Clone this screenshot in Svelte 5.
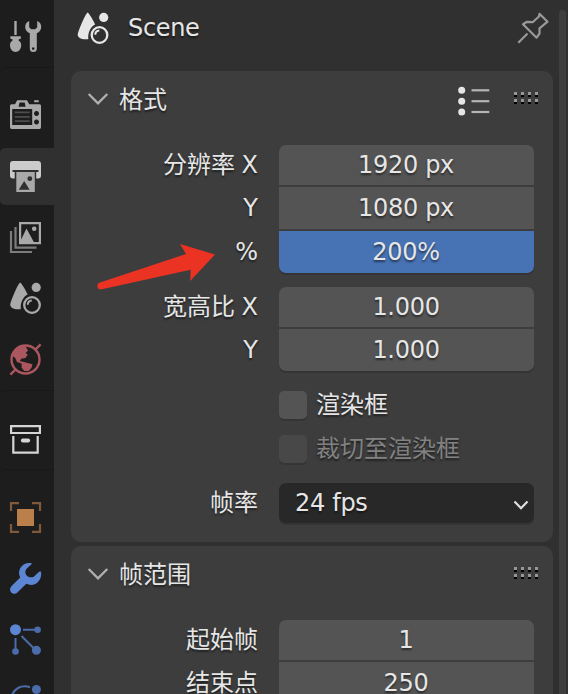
<script>
  const groups = [
    { line: 0, tabs: ['tool'] },
    { line: 17, tabs: ['render', 'output', 'layers', 'scene', 'world'] },
    { line: 19, tabs: ['collection'] },
    { line: 17, pull: -2, tabs: ['object', 'modifier', 'particles', 'physics'] }
  ];
  const boxes = {
    tool: '8 18 36 36', render: '8 97 36 36', output: '8 158 36 36', layers: '8 219 36 36',
    scene: '8 280 36 36', world: '8 341 36 36', collection: '8 422 36 36', object: '8 499 36 36',
    modifier: '8 560 36 36', particles: '8 621 36 36', physics: '8 682 36 36'
  };
  const resolution = [
    { label: '分辨率 X', value: '1920 px' },
    { label: 'Y', value: '1080 px' },
    { label: '%', value: '200%', slider: true }
  ];
  const aspect = [
    { label: '宽高比 X', value: '1.000' },
    { label: 'Y', value: '1.000' }
  ];
  const range = [
    { label: '起始帧', value: '1' },
    { label: '结束点', value: '250' }
  ];
</script>

{#snippet sceneShape(color)}
  <g fill={color}>
    <path d="M20 282.6C18.2 283.6 12.6 296.5 10.4 303.3C9.2 307.8 14 309.8 20.8 309.2C20.2 302.5 23 297 27.6 294.6C25.4 289.6 21.8 283.6 20 282.6Z" />
    <circle cx="36.2" cy="287.4" r="4.6" />
    <circle cx="32" cy="305" r="7.8" fill="none" stroke={color} stroke-width="2.3" />
    <path d="M27.8 304.8C27.8 302.6 29.5 300.8 31.8 300.6" fill="none" stroke={color} stroke-width="2" />
  </g>
{/snippet}

{#snippet icon(name)}
  <svg width="36" height="36" viewBox={boxes[name]} fill="#a9a9a9">
    {#if name === 'tool'}
      <path d="M14.3 21h2.4v14h-2.4zM10.6 36.2H20.6Q21.4 37.6 20.6 38.8L18.6 39.4V40.6C20.4 41.6 21.4 43.4 21.2 45.6C20.9 49.6 18.6 52 15.6 52S10.3 49.6 10 45.6C9.8 43.4 10.8 41.6 12.6 40.6V39.4L10.6 38.8Q9.8 37.6 10.6 36.2Z" />
      <path fill-rule="evenodd" d="M29.2 21V27.2L31.2 29.3H35.2L37.2 27.2V21C39.8 22 41.2 24.3 41.2 27C41.2 29.8 39.5 32 36.8 33.3V48.6A3.5 3.5 0 0 1 29.8 48.6V33.3C26.9 32 25.2 29.8 25.2 27C25.2 24.3 26.6 22 29.2 21ZM33.2 47.2a1.3 1.3 0 1 0 .01 0Z" />
    {:else if name === 'render'}
      <path fill-rule="evenodd" d="M11.5 104.2H15L17.2 100.2H27L29.2 104.2H39.5Q41 104.2 41 105.7V127.3Q41 129 39.5 129H11.5Q10 129 10 127.3V105.7Q10 104.2 11.5 104.2ZM19.5 102.5L18.6 106.7H25.6L24.7 102.5ZM12.2 109V125H32.2V109ZM36.5 111a2.5 2.5 0 1 0 .01 0ZM36.5 119.6a2.5 2.5 0 1 0 .01 0Z" />
      <path d="M34.2 100.2h4.5v2h-4.5z" />
      <path d="M14.7 112.3h15M14.7 116.8h15M14.7 121.2h15" stroke="#4d4d4d" stroke-width="1.8" />
    {:else if name === 'output'}
      <path fill="#cccccc" d="M13 161H38Q41 161 41 164V176Q41 178.4 38.5 178.4H36.2V172H38.5V170H12.5V172H14.7V178.4H12.5Q10 178.4 10 176V164Q10 161 13 161Z" />
      <path d="M16.3 172h18.5v20H16.3z" />
      <path fill="#303030" d="M18.7 189.8L24.2 181L29.6 189.8Z" />
      <circle cx="29.8" cy="178.7" r="2.4" fill="#303030" />
    {:else if name === 'layers'}
      <path d="M11 231V252H32M15.5 227V247.6H36.5" fill="none" stroke="#7c7c7c" stroke-width="2.2" />
      <path fill-rule="evenodd" d="M19 222H41V244.2H19ZM21.2 224.2V239.5L26.5 228.6L33.8 242H38.8V224.2Z" />
      <circle cx="34.2" cy="228.7" r="2.3" />
    {:else if name === 'scene'}
      {@render sceneShape('#a9a9a9')}
    {:else if name === 'world'}
      <g fill="#ac575f" stroke="#ac575f">
        <circle cx="25.5" cy="359.5" r="14" fill="none" stroke-width="2.4" />
        <path d="M35.5 349.5L40.6 344.4M15.5 369.5L10.4 374.6" stroke-width="2.4" />
        <path stroke="none" d="M12.2 355.5C13.5 350 19 345.8 25.5 346.2L28 350.5L25.7 353L27.8 354.8L25.4 357.9L21.2 358.8L19.8 361.2L22 361.4L32.4 364.3L31.6 367.8L28.6 370.9H24.2L21.5 367.4L21.8 363.8L17 362L15.2 358Z" />
      </g>
    {:else if name === 'collection'}
      <g fill="none" stroke="#d5d5d5" stroke-width="2.2">
        <path d="M11.1 426.1H39.9V433H11.1ZM13.3 436V452.6H37.7V436" />
        <path d="M22.9 440.5H28.1" stroke-width="4" stroke-linecap="round" />
      </g>
    {:else if name === 'object'}
      <rect x="17" y="509" width="17" height="17" fill="#bb7f4c" />
      <path d="M11 511V503.2H19M32 503.2H40V511M40 524V531.8H32M19 531.8H11V524" fill="none" stroke="#80593a" stroke-width="2.2" />
    {:else if name === 'modifier'}
      <path fill="#5c86d3" d="M31.8 563.2C27 562.3 22.5 564.2 20.3 568C18.5 571.2 18.8 575 20.2 577.4L11.4 586.3C9.7 588 9.7 590.7 11.2 592.4C12.9 594.2 15.7 594.3 17.4 592.6L26.3 583.8C30 585.7 35 585.3 38 582C41 579 41.6 575.5 41 571.6C39.8 571.3 38.8 571.8 38 572.7L33.8 576.7C31 578.2 27.8 577 26.3 575C24.8 572.8 25 570.5 27 568.2L30.7 565.1C31.4 564.6 31.8 564 31.8 563.2Z" />
    {:else if name === 'particles'}
      <g fill="#4b6caa">
        <path d="M23 629.7H35M15.5 638V649M21.5 636L33.5 648" stroke="#4b6caa" stroke-width="2" />
        <circle cx="37.6" cy="629.7" r="3.3" /><circle cx="15.5" cy="651.5" r="3.3" /><circle cx="36.4" cy="650.2" r="4.5" />
        <circle cx="15.5" cy="629.7" r="5.5" fill="#5c86d3" />
      </g>
    {:else}
      <path d="M11.5 697C13.8 688.5 21.5 684.3 30 687.2" fill="none" stroke="#4b6caa" stroke-width="2.2" />
      <circle cx="36.4" cy="689.5" r="4.5" fill="#4b6caa" />
      <circle cx="25.5" cy="702" r="7" fill="#5c86d3" />
    {/if}
  </svg>
{/snippet}

{#snippet grip()}
  <svg class="grip" width="25" height="12" viewBox="0 0 25 12" shape-rendering="crispEdges">
    {#each [0, 7, 14, 21] as x}
      {#each [0, 7] as y}
        <rect {x} {y} width="3" height="3" fill="#979797" />
        <rect {x} y={y + 3} width="3" height="2" fill="#000" />
      {/each}
    {/each}
  </svg>
{/snippet}

{#snippet chevron()}
  <svg class="chevron" width="22" height="14" viewBox="0 0 22 14">
    <path d="M1.7 2L11 11.4L20.3 2" fill="none" stroke="#b0b0b0" stroke-width="2.3" />
  </svg>
{/snippet}

{#snippet fields(rows)}
  <div class="fields">
    {#each rows as row}
      <div class="row">
        <span class="label">{row.label}</span>
        <div class="field" class:slider={row.slider}>{row.value}</div>
      </div>
    {/each}
  </div>
{/snippet}

<div class="editor">
  <nav>
    {#each groups as group}
      <div class="group" style="padding-top: {group.line || 6}px; margin-top: {group.pull || 0}px" class:ruled={group.line}>
        {#each group.tabs as name}
          <div class="tab" class:active={name === 'output'}>{@render icon(name)}</div>
        {/each}
      </div>
    {/each}
  </nav>

  <main>
    <header>
      <svg width="36" height="36" viewBox="8.5 280 36 36">{@render sceneShape('#e6e6e6')}</svg>
      <span>Scene</span>
      <svg class="pin" width="36" height="36" viewBox="514 10 36 36">
        <path d="M539.5 13.8L547.5 21.7L539.5 28.4V33.5L536.6 37.7L523 24.2L527 21.8L532.6 22.2L539 16.5ZM527.5 33.5L518.3 42.7" fill="none" stroke="#999" stroke-width="2.2" stroke-linejoin="round" />
      </svg>
    </header>

    <section class="format">
      <div class="title">
        {@render chevron()}
        <span>格式</span>
        <svg class="presets" width="34" height="30" viewBox="0 0 34 30">
          {#each [4.3, 15.2, 26] as y}
            <circle cx="4.7" cy={y} r="3.5" fill="#e6e6e6" />
            <path d="M14.5 {y}H32.3" stroke="#b5b5b5" stroke-width="2.2" />
          {/each}
        </svg>
        {@render grip()}
      </div>
      {@render fields(resolution)}
      {@render fields(aspect)}
      <div class="checks">
        <div class="check"><i></i><span>渲染框</span></div>
        <div class="check disabled"><i></i><span>裁切至渲染框</span></div>
      </div>
      <div class="row rate">
        <span class="label">帧率</span>
        <div class="field select">
          <span>24 fps</span>
          <svg width="16" height="11" viewBox="0 0 16 11"><path d="M1.5 1.5L8 8.2L14.5 1.5" fill="none" stroke="#e0e0e0" stroke-width="2.2" /></svg>
        </div>
      </div>
    </section>

    <section class="range">
      <div class="title">
        {@render chevron()}
        <span>帧范围</span>
        {@render grip()}
      </div>
      {@render fields(range)}
    </section>
  </main>

  <div class="scroll"><div class="thumb"></div></div>

  <svg class="arrow" width="122" height="50" viewBox="95 242 122 50">
    <path d="M215 254.4L180 244L186 254L99.3 282.8C96.6 284 96.6 288.8 100.2 289.4L101.8 289.3L190.7 269.8L190.2 281Z" fill="#eb3323" />
  </svg>
</div>

<style>
  :global(body) { margin: 0; background: #303030; }
  .editor {
    position: relative;
    display: flex;
    width: 568px;
    height: 694px;
    overflow: hidden;
    background: #303030;
    color: #e6e6e6;
    font: 24px/40px "DejaVu Sans", "Noto Sans CJK SC", sans-serif;
    text-shadow: 0 2px 2px rgba(0, 0, 0, 0.5);
  }
  svg { display: block; flex: none; }
  nav { width: 54px; flex: none; background: #1d1d1d; }
  .group { border-radius: 6px 0 0 0; }
  .ruled { border-top: 1px solid #181818; }
  .tab { box-sizing: border-box; height: 61px; padding: 12px 8px; }
  .active { background: #303030; border-block: 2px solid #1d1d1d; padding-block: 10px; border-radius: 6px 0 0 6px; }
  main { width: 482px; margin-left: 17px; flex: none; }
  header { display: flex; height: 71px; padding-left: 5px; padding-top: 10px; box-sizing: border-box; }
  header span { margin-left: 16px; line-height: 36px; letter-spacing: -0.35px; }
  .pin { margin-left: auto; margin-right: 3px; }
  section { box-sizing: border-box; background: #3d3d3d; border-radius: 10px; }
  .format { height: 471px; margin-bottom: 4px; }
  .range { height: 200px; }
  .title { display: flex; height: 74px; padding-left: 16px; box-sizing: border-box; }
  .title span { margin: 9px auto 0 10px; }
  .chevron { margin-top: 21px; }
  .presets { margin: 15px 23px 0 0; }
  .grip { margin: 21px 14px 0 0; }
  .fields { display: flex; flex-direction: column; gap: 2px; margin-bottom: 14px; }
  .row { display: flex; gap: 21px; height: 42px; line-height: 42px; }
  .row:first-child, .rate { height: 40px; line-height: 40px; }
  .label { width: 187px; text-align: right; white-space: pre; word-spacing: -1px; }
  .field { box-sizing: border-box; width: 255px; padding-right: 1px; background: #545454; text-align: center; letter-spacing: -0.3px; }
  .row:first-child .field { border-radius: 7px 7px 0 0; }
  .row:last-child .field { border-radius: 0 0 7px 7px; box-shadow: 0 2px 0 #343434; }
  .field.slider { background: #4772b3; }
  .checks { display: flex; flex-direction: column; gap: 16px; padding: 6px 0 20px 208px; }
  .check { display: flex; gap: 9px; height: 28px; line-height: 28px; }
  .check i { width: 28px; height: 28px; border-radius: 5px; background: #545454; box-shadow: 0 2px 0 #353535; }
  .disabled { color: #818181; }
  .disabled i { background: #484848; }
  .row.rate .field.select { display: flex; justify-content: space-between; padding: 0 5px 0 16px; border-radius: 7px; background: #282828; }
  .select svg { margin-top: 17px; }
  .range .row:last-child .field { border-radius: 0; }
  .scroll { padding: 10px 0 0 6px; }
  .thumb { width: 7px; height: 690px; border-radius: 4px 4px 0 0; background: #3e3e3e; }
  .arrow { position: absolute; left: 95px; top: 242px; }
</style>
